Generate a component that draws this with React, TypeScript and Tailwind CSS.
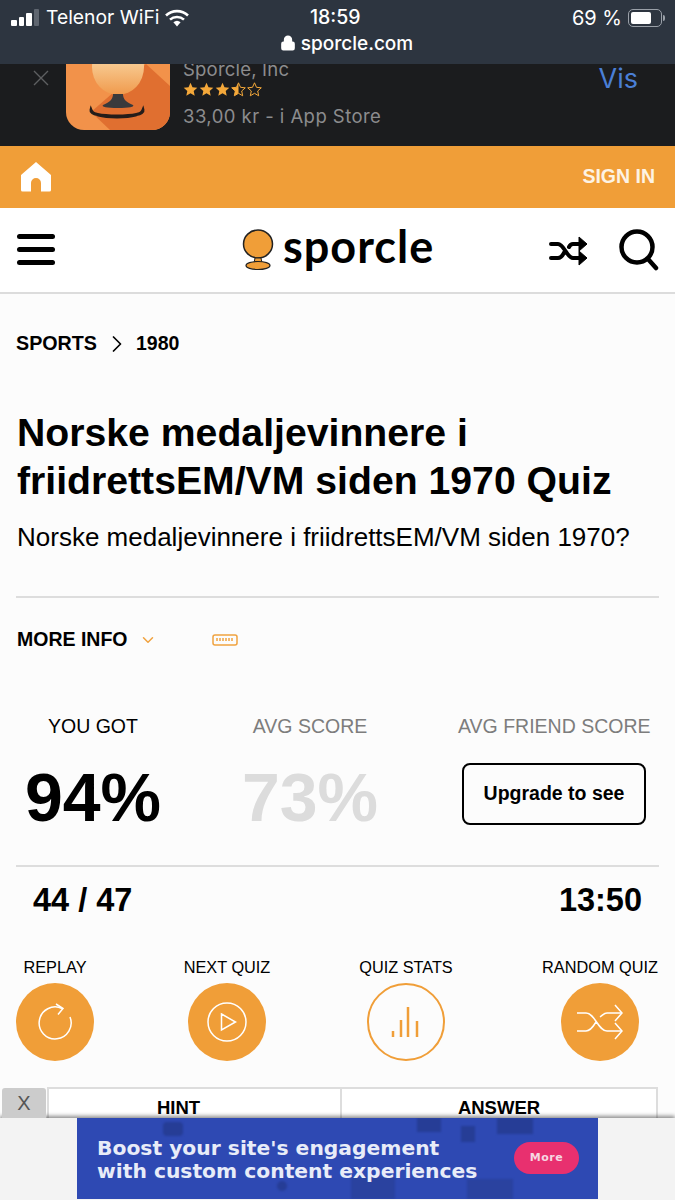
import { ChevronDown, ChevronRight, Lock } from "lucide-react";

const actions = [
  { label: "REPLAY", icon: "replay", filled: true, gap: "ml-0" },
  { label: "NEXT QUIZ", icon: "play", filled: true, gap: "ml-[94px]" },
  { label: "QUIZ STATS", icon: "stats", filled: false, gap: "ml-[101px]" },
  { label: "RANDOM QUIZ", icon: "shuffle", filled: true, gap: "ml-[116px]" },
];

function Star({ fill }: { fill: "full" | "half" | "none" }) {
  const d = "M7.500 .8l2 4.500 4.800.5-3.600 3.200 1 4.800-4.200-2.500-4.200 2.500 1-4.800L.7 5.800l4.800-.5z";
  return (
    <svg width="15" height="15" viewBox="0 0 15 15" className="mr-[1px]">
      <defs>
        <clipPath id="half-star">
          <rect x="0" y="0" width="7.500" height="15" />
        </clipPath>
      </defs>
      {fill === "full" && <path d={d} fill="#f4a83a" />}
      {fill === "half" && <path d={d} fill="#f4a83a" clipPath="url(#half-star)" />}
      {fill !== "full" && <path d={d} fill="none" stroke="#f4a83a" strokeWidth="1" />}
    </svg>
  );
}

function StatusBar() {
  return (
    <div className="h-16 bg-[#2d3540] text-white font-['Inter',sans-serif] relative z-10">
      <div className="h-[35px] pt-[1px] pl-[11px] pr-[10px] flex items-center justify-between relative">
        <div className="flex items-center">
          <div className="flex items-end gap-[2px] h-[17px] mb-[1px]">
            <span className="w-[5.500px] h-[6px] rounded-[1px] bg-white" />
            <span className="w-[5.500px] h-[9px] rounded-[1px] bg-white" />
            <span className="w-[5.500px] h-[13px] rounded-[1px] bg-white" />
            <span className="w-[5.500px] h-[17px] rounded-[1px] bg-[#5f6670]" />
          </div>
          <span className="ml-[7px] text-[19.300px] leading-none">Telenor WiFi</span>
          <svg width="24" height="18" viewBox="0 0 24 18" className="ml-[6px]">
            <path d="M1 6.500a16 16 0 0 1 22 0" fill="none" stroke="#fff" strokeWidth="2.600" />
            <path d="M5 10.600a10.500 10.500 0 0 1 14 0" fill="none" stroke="#fff" strokeWidth="2.600" />
            <path d="M8.400 13.200a5.500 5.500 0 0 1 7.200 0L12 17.400z" fill="#fff" />
          </svg>
        </div>
        <span className="absolute left-[310px] top-[5px] text-[19.500px] font-medium leading-[24px]">18:59</span>
        <div className="flex items-center">
          <span className="text-[20px] leading-none mr-[6px]">69 %</span>
          <div className="w-[34px] h-[18px] rounded-[5px] border border-[#9aa0a8] p-[2px]">
            <div className="w-[20px] h-full rounded-[2px] bg-white" />
          </div>
          <span className="w-[2px] h-[6px] ml-[1px] rounded-r-sm bg-[#9aa0a8]" />
        </div>
      </div>
      <div className="flex items-center justify-center h-[18px] mt-[-1px] pl-[18px]">
        <Lock size={16} strokeWidth={2.500} className="mr-[5px] fill-white" />
        <span className="text-[19px] font-medium leading-none">sporcle.com</span>
      </div>
    </div>
  );
}

function AppBanner() {
  return (
    <div className="h-[82px] bg-[#1b1c1e] flex overflow-hidden font-['Inter',sans-serif]">
      <span className="w-[66px] pl-[33px] shrink-0">
        <svg width="16" height="16" viewBox="0 0 16 16" className="mt-[6px]">
          <path d="M1 1l14 14M15 1L1 15" stroke="#5e5f61" strokeWidth="1.400" />
        </svg>
      </span>
      <svg width="104" height="66" viewBox="0 0 104 66" className="shrink-0">
        <defs>
          <linearGradient id="icon-globe" x1="0" y1="0" x2="0" y2="1">
            <stop offset="0" stopColor="#fff3dc" />
            <stop offset="0.45" stopColor="#f7c88e" />
            <stop offset="1" stopColor="#f09a4c" />
          </linearGradient>
        </defs>
        <path d="M0 0h104v48a18 18 0 0 1-18 18H18A18 18 0 0 1 0 48z" fill="#f2924a" />
        <path d="M80 0l24 22v26a18 18 0 0 1-18 18H44L25 48z" fill="#e06f30" />
        <ellipse cx="52" cy="3" rx="26" ry="28" fill="url(#icon-globe)" />
        <path d="M47 30h10c0 4 2 8 10 11 2 2-4 3-15 3s-17-1-15-3c8-3 10-7 10-11z" fill="#3a3a3c" />
        <path d="M25 46c2 5 13 7 26 7s24-2 26-7c1 4-10 6-26 6s-27-2-26-6z" fill="#241d1a" stroke="#241d1a" strokeWidth="3" />
      </svg>
      <div className="ml-[13px] flex flex-col text-[#8c8c8e]">
        <span className="text-[18.500px] leading-[22px] mt-[-6px] tracking-[0.2px]">Sporcle, Inc</span>
        <div className="flex mt-[1px] h-[16px] items-center">
          <Star fill="full" />
          <Star fill="full" />
          <Star fill="full" />
          <Star fill="half" />
          <Star fill="none" />
        </div>
        <span className="text-[18.500px] leading-[22px] mt-[8px] tracking-[0.45px]">33,00 kr - i App Store</span>
      </div>
      <span className="ml-auto mr-[37px] text-[27px] leading-[30px] text-[#4a7fd6]">Vis</span>
    </div>
  );
}

function SiteHeader() {
  return (
    <>
      <div className="h-[62px] bg-[#f09e38] flex items-center justify-between pl-[20px] pr-[20px]">
        <svg width="32" height="32" viewBox="0 0 32 32">
          <path
            d="M16 1L31 14v15a1.500 1.500 0 0 1-1.500 1.500H21V22a5 5 0 0 0-10 0v8.500H2.500A1.500 1.500 0 0 1 1 29V14z"
            fill="#fff"
          />
        </svg>
        <span className="font-['Liberation_Sans',sans-serif] font-bold text-[19.500px] text-[#fdf3e4]">SIGN IN</span>
      </div>
      <div className="h-[86px] bg-white border-b-2 border-[#dcdcdc] relative flex items-center justify-between pl-[17px] pr-[16px]">
        <div className="flex flex-col gap-[8px] mb-[2px]">
          <span className="block w-[38px] h-[5px] rounded-full bg-black" />
          <span className="block w-[38px] h-[5px] rounded-full bg-black" />
          <span className="block w-[38px] h-[5px] rounded-full bg-black" />
        </div>
        <div className="absolute left-[242px] top-[21px] flex items-center">
          <svg width="32" height="42" viewBox="0 0 32 42">
            <ellipse cx="16" cy="15" rx="14.500" ry="14" fill="#f09e38" stroke="#222" strokeWidth="1.500" />
            <path d="M13 29h6l1 5h-8z" fill="#f09e38" stroke="#222" strokeWidth="1" />
            <ellipse cx="16" cy="36.500" rx="12" ry="4" fill="#f09e38" stroke="#222" strokeWidth="1.200" />
          </svg>
          <span className="ml-[9px] font-['Lato',sans-serif] font-bold text-[45px] leading-none text-black mt-[-7px] tracking-[1px]">
            sporcle
          </span>
        </div>
        <div className="flex items-center mb-[1px]">
          <svg width="40" height="30" viewBox="0 0 40 30" className="mr-[30px] mt-[2px]">
            <path
              d="M2 8h7c6 0 9 14 15 14h8M2 22h7c3 0 5-3 6.500-6M20 11c1-2 2-3 4-3h8"
              fill="none"
              stroke="#000"
              strokeWidth="4"
              strokeLinecap="round"
            />
            <path d="M30 1l8 7-8 7zM30 15l8 7-8 7z" fill="#000" stroke="#000" strokeLinejoin="round" />
          </svg>
          <svg width="40" height="42" viewBox="0 0 40 42">
            <circle cx="18" cy="18" r="15.500" fill="none" stroke="#000" strokeWidth="4.500" />
            <path d="M29 30l8 9" stroke="#000" strokeWidth="4.500" strokeLinecap="round" />
          </svg>
        </div>
      </div>
    </>
  );
}

function ActionIcon({ icon }: { icon: string }) {
  if (icon === "replay") {
    return (
      <svg width="38" height="38" viewBox="0 0 38 38" fill="none" stroke="#fff" strokeWidth="1.500">
        <path d="M26 5.500A16 16 0 1 0 34 14" />
        <path d="M20 1l7 4.500-5 6" />
      </svg>
    );
  }
  if (icon === "play") {
    return (
      <svg width="40" height="40" viewBox="0 0 40 40" fill="none" stroke="#fff" strokeWidth="1.500">
        <circle cx="20" cy="20" r="19" />
        <path d="M14.500 12l14 8-14 8z" />
      </svg>
    );
  }
  if (icon === "stats") {
    return (
      <svg width="32" height="32" viewBox="0 0 32 32" stroke="#f09e38" strokeWidth="2.500">
        <path d="M3 31v-6M11 31V14M18 31V1M27 31V15" />
      </svg>
    );
  }
  return (
    <svg width="46" height="36" viewBox="0 0 46 36" fill="none" stroke="#fff" strokeWidth="1.500">
      <path d="M0 9h9c9 0 12 18 21 18h15M0 27h9c4 0 7-4 10-9M23 13c3-2 4-4 7-4h15" />
      <path d="M38 1l7 8-7 8M38 19l7 8-7 8" />
    </svg>
  );
}

function QuizBody() {
  return (
    <div className="bg-[#fcfcfc] px-[16px] pt-[38px] font-['Liberation_Sans',sans-serif] text-black">
      <div className="flex items-center h-[24px]">
        <span className="font-bold text-[19.700px]">SPORTS</span>
        <ChevronRight size={28} strokeWidth={1.500} className="ml-[6px] mr-[5px]" />
        <span className="font-bold text-[19.500px]">1980</span>
      </div>

      <h1 className="mt-[53px] mr-[-10px] ml-[1px] font-bold text-[39.200px] leading-[48px]">
        Norske medaljevinnere i
        <br />
        friidrettsEM/VM siden 1970 Quiz
      </h1>
      <p className="mt-[15px] ml-[1px] text-[26px] leading-[34px] whitespace-nowrap">
        Norske medaljevinnere i friidrettsEM/VM siden 1970?
      </p>

      <div className="mt-[42px] border-t-2 border-[#dddddd] h-[86px] flex items-center">
        <span className="font-bold text-[19.500px] ml-[1px]">MORE INFO</span>
        <ChevronDown size={18} strokeWidth={2} className="ml-[11px] text-[#f0a23f]" />
        <svg width="26" height="12" viewBox="0 0 26 12" className="ml-[55px]" fill="none" stroke="#f0a23f">
          <rect x="1" y="1" width="24" height="10" rx="2" strokeWidth="1.500" />
          <path d="M5 4v3M8 4v3M11 4v3M14 4v3M17 4v3M20 4v3" strokeWidth="1.500" />
        </svg>
      </div>

      <div className="h-[183px] grid grid-cols-[154px_280px_1fr] mr-[-16px]">
        <div className="flex flex-col items-center">
          <span className="mt-[32px] text-[19.500px] leading-[24px]">YOU GOT</span>
          <span className="mt-[19px] font-bold text-[68px] leading-[80px]">94%</span>
        </div>
        <div className="flex flex-col items-center">
          <span className="mt-[32px] text-[19.500px] leading-[24px] text-[#7d7d7d]">AVG SCORE</span>
          <span className="mt-[19px] font-bold text-[68px] leading-[80px] text-[#dcdcdc]">73%</span>
        </div>
        <div className="flex flex-col items-start">
          <span className="mt-[32px] ml-[8px] text-[19.500px] leading-[24px] text-[#7d7d7d] whitespace-nowrap">
            AVG FRIEND SCORE
          </span>
          <div className="mt-[25px] w-[184px] h-[62px] ml-[12px] rounded-lg border-2 border-black flex items-center justify-center font-bold text-[19.500px]">
            Upgrade to see
          </div>
        </div>
      </div>

      <div className="border-t-2 border-[#dddddd] h-[66px] pt-[2px] flex items-center justify-between pl-[17px] pr-[17px] font-bold text-[32.500px]">
        <span>44 / 47</span>
        <span>13:50</span>
      </div>

      <div className="mt-[26px] flex">
        {actions.map((a) => (
          <div key={a.label} className={`w-[78px] flex flex-col items-center ${a.gap}`}>
            <span className="text-[16.300px] leading-[20px] whitespace-nowrap">{a.label}</span>
            <span
              className={
                a.filled
                  ? "mt-[6px] w-[78px] h-[78px] rounded-full bg-[#f09e38] flex items-center justify-center"
                  : "mt-[6px] w-[78px] h-[78px] rounded-full border-2 border-[#f09e38] flex items-center justify-center"
              }
            >
              <ActionIcon icon={a.icon} />
            </span>
          </div>
        ))}
      </div>

      <div className="mt-[26px] ml-[31px] mr-[1px] h-[60px] border-2 border-[#dddddd] bg-white grid grid-cols-[291px_1fr] font-bold text-[18.500px] text-center">
        <span className="pt-[5px] pr-[32px]">HINT</span>
        <span className="pt-[5px] border-l-2 border-[#dddddd]">ANSWER</span>
      </div>
    </div>
  );
}

function AdOverlay() {
  return (
    <div className="absolute left-0 right-0 bottom-0 h-[82px] bg-[#f3f3f3] shadow-[0_-2px_4px_rgba(0,0,0,0.45)] font-['Liberation_Sans',sans-serif]">
      <span className="absolute left-[2px] top-[-30px] w-[44px] h-[30px] bg-[#cccccc] rounded-t-[3px] flex items-center justify-center text-[#555] text-[20px]">
        X
      </span>
      <div className="ml-[77px] w-[521px] h-[81px] bg-[#2e49b3] relative overflow-hidden">
        <span className="absolute left-[86px] top-[4px] w-[20px] h-[14px] rounded-sm blur-[1px] bg-[#263d96]" />
        <span className="absolute left-[340px] top-0 w-[24px] h-[14px] blur-[1px] bg-[#263d96]" />
        <span className="absolute left-[384px] top-[8px] w-[14px] h-[16px] blur-[1px] bg-[#263d96]" />
        <span className="absolute left-[420px] top-0 w-[36px] h-[16px] blur-[1px] bg-[#263d96]" />
        <span className="absolute left-[274px] bottom-0 w-[44px] h-[22px] blur-[1px] bg-[#2a429f]" />
        <span className="absolute left-[390px] bottom-0 w-[46px] h-[20px] blur-[1px] bg-[#2a429f]" />
        <span className="absolute left-[200px] bottom-[8px] w-[10px] h-[10px] rounded-full blur-[1px] bg-[#263d96]" />
        <p className="relative pl-[20px] pt-[19px] font-['DejaVu_Sans',sans-serif] font-bold text-[20.300px] leading-[23px] text-[#e8ecf8] whitespace-nowrap">
          Boost your site's engagement
          <br />
          with custom content experiences
        </p>
        <span className="absolute left-[437px] top-[24px] w-[65px] h-[32px] rounded-full bg-[#e8306f] flex items-center justify-center font-['DejaVu_Sans',sans-serif] font-bold text-[11px] tracking-[0.5px] text-[#f6d7e2]">
          More
        </span>
      </div>
    </div>
  );
}

export default function App() {
  return (
    <div className="relative h-[1200px] overflow-hidden bg-[#fcfcfc]">
      <StatusBar />
      <AppBanner />
      <SiteHeader />
      <QuizBody />
      <AdOverlay />
    </div>
  );
}
